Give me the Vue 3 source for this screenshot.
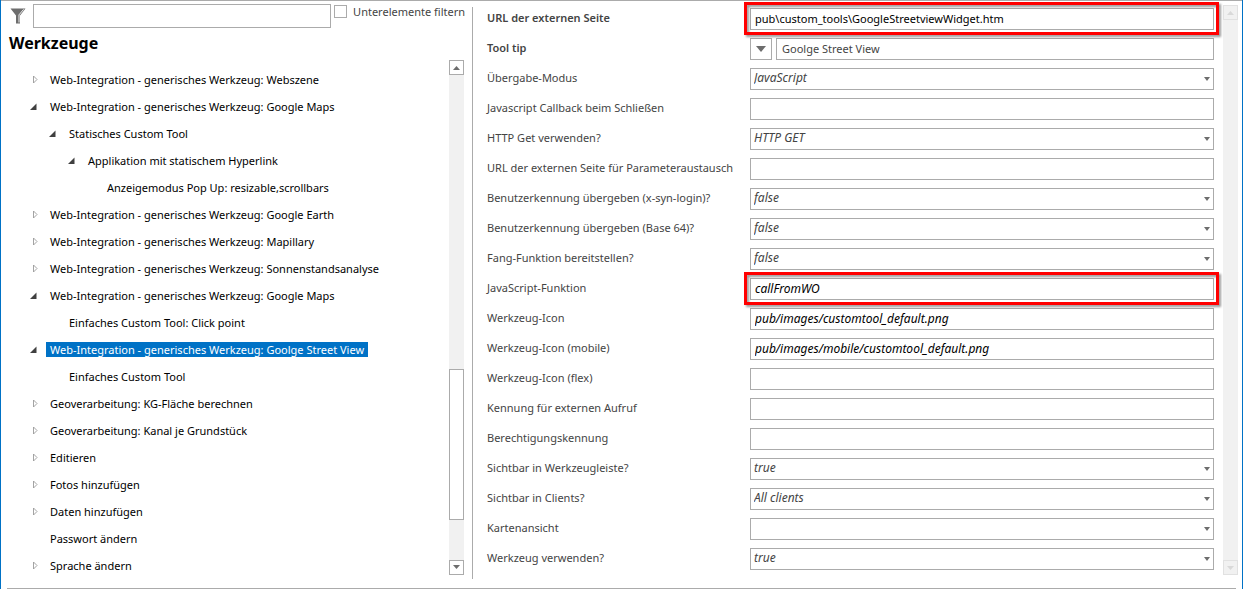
<template>
  <div class="window">
    <main class="content">
      <section class="tools">
        <div class="filter-bar">
          <svg class="funnel" viewBox="0 0 16 16" aria-hidden="true">
            <path d="M0.5 0.5h15L10 7.5V15.5H6V7.5z" fill="#6d6d6d" />
            <path d="M13.6 1.4L9 6.8V14.5" fill="none" stroke="#fff" stroke-width="0.9" />
          </svg>
          <input v-model="filterText" class="filter-input" type="text" aria-label="Filter" />
          <input id="filter-children" v-model="filterChildren" class="check" type="checkbox" />
          <label class="check-label" for="filter-children">Unterelemente filtern</label>
        </div>
        <h1 class="title">Werkzeuge</h1>
        <div class="tree-area">
          <ul class="tree">
            <li
              v-for="(node, i) in nodes"
              :key="i"
              class="node"
              :class="`depth-${node.depth}`"
            >
              <button
                v-if="node.state"
                class="toggle"
                type="button"
                :aria-label="node.label"
                :aria-expanded="node.state === 'open'"
              >
                <svg v-if="node.state === 'open'" viewBox="0 0 8 8">
                  <path d="M7.5 0.5v6.5h-6.5z" fill="#404040" />
                </svg>
                <svg v-else viewBox="0 0 8 8">
                  <path d="M4.5 0v7L8 3.5z" fill="#fff" stroke="#9a9a9a" stroke-width="0.9" />
                </svg>
              </button>
              <span v-else class="toggle"></span>
              <span class="node-label" :class="{ selected: i === selected }" @click="selected = i">{{ node.label }}</span>
            </li>
          </ul>
          <div class="scrollbar">
            <button class="scroll-button" type="button" aria-label="Nach oben">
              <svg viewBox="0 0 7 4"><path d="M0 4h7L3.5 0z" fill="#6d6d6d" /></svg>
            </button>
            <div class="track-before"></div>
            <div class="thumb"></div>
            <div class="track-after"></div>
            <button class="scroll-button" type="button" aria-label="Nach unten">
              <svg viewBox="0 0 7 4"><path d="M0 0h7L3.5 4z" fill="#6d6d6d" /></svg>
            </button>
          </div>
        </div>
      </section>

      <section class="properties">
        <form class="form" @submit.prevent>
          <div v-for="(field, i) in fields" :key="i" class="row">
            <label class="row-label" :class="{ required: field.required }" :for="`field-${i}`">{{ field.label }}</label>
            <div class="control" :class="{ marked: field.marked }">
              <button v-if="field.menu" class="menu-button" type="button" aria-label="Sprache">
                <svg viewBox="0 0 10 6"><path d="M0 0h10L5 6z" fill="#6d6d6d" /></svg>
              </button>
              <template v-if="field.type === 'select'">
                <select :id="`field-${i}`" v-model="field.value" class="box select">
                  <option v-for="option in field.options" :key="option">{{ option }}</option>
                </select>
                <svg class="select-arrow" viewBox="0 0 6 4"><path d="M0 0h6L3 4z" fill="#6d6d6d" /></svg>
              </template>
              <input
                v-else
                :id="`field-${i}`"
                v-model="field.value"
                class="box"
                :class="{ italic: field.italic, muted: field.menu }"
                type="text"
              />
            </div>
          </div>
        </form>
        <div class="scrollbar disabled">
          <button class="scroll-button" type="button" aria-label="Nach oben" disabled>
            <svg viewBox="0 0 7 4"><path d="M0 4h7L3.5 0z" fill="#d9d9d9" /></svg>
          </button>
          <div class="track-before"></div>
          <button class="scroll-button" type="button" aria-label="Nach unten" disabled>
            <svg viewBox="0 0 7 4"><path d="M0 0h7L3.5 4z" fill="#d9d9d9" /></svg>
          </button>
        </div>
      </section>
    </main>
  </div>
</template>

<script setup>
import { ref } from 'vue'

const filterText = ref('')
const filterChildren = ref(false)
const selected = ref(10)

const nodes = [
  { label: 'Web-Integration - generisches Werkzeug: Webszene', depth: 0, state: 'closed' },
  { label: 'Web-Integration - generisches Werkzeug: Google Maps', depth: 0, state: 'open' },
  { label: 'Statisches Custom Tool', depth: 1, state: 'open' },
  { label: 'Applikation mit statischem Hyperlink', depth: 2, state: 'open' },
  { label: 'Anzeigemodus Pop Up: resizable,scrollbars', depth: 3 },
  { label: 'Web-Integration - generisches Werkzeug: Google Earth', depth: 0, state: 'closed' },
  { label: 'Web-Integration - generisches Werkzeug: Mapillary', depth: 0, state: 'closed' },
  { label: 'Web-Integration - generisches Werkzeug: Sonnenstandsanalyse', depth: 0, state: 'closed' },
  { label: 'Web-Integration - generisches Werkzeug: Google Maps', depth: 0, state: 'open' },
  { label: 'Einfaches Custom Tool: Click point', depth: 1 },
  { label: 'Web-Integration - generisches Werkzeug: Goolge Street View', depth: 0, state: 'open' },
  { label: 'Einfaches Custom Tool', depth: 1 },
  { label: 'Geoverarbeitung: KG-Fläche berechnen', depth: 0, state: 'closed' },
  { label: 'Geoverarbeitung: Kanal je Grundstück', depth: 0, state: 'closed' },
  { label: 'Editieren', depth: 0, state: 'closed' },
  { label: 'Fotos hinzufügen', depth: 0, state: 'closed' },
  { label: 'Daten hinzufügen', depth: 0, state: 'closed' },
  { label: 'Passwort ändern', depth: 0 },
  { label: 'Sprache ändern', depth: 0, state: 'closed' }
]

const bool = ['true', 'false']

const fields = ref([
  { label: 'URL der externen Seite', value: 'pub\\custom_tools\\GoogleStreetviewWidget.htm', required: true, marked: true },
  { label: 'Tool tip', value: 'Goolge Street View', required: true, menu: true },
  { label: 'Übergabe-Modus', value: 'JavaScript', type: 'select', options: ['JavaScript'] },
  { label: 'Javascript Callback beim Schließen', value: '' },
  { label: 'HTTP Get verwenden?', value: 'HTTP GET', type: 'select', options: ['HTTP GET'] },
  { label: 'URL der externen Seite für Parameteraustausch', value: '' },
  { label: 'Benutzerkennung übergeben (x-syn-login)?', value: 'false', type: 'select', options: bool },
  { label: 'Benutzerkennung übergeben (Base 64)?', value: 'false', type: 'select', options: bool },
  { label: 'Fang-Funktion bereitstellen?', value: 'false', type: 'select', options: bool },
  { label: 'JavaScript-Funktion', value: 'callFromWO', italic: true, marked: true },
  { label: 'Werkzeug-Icon', value: 'pub/images/customtool_default.png', italic: true },
  { label: 'Werkzeug-Icon (mobile)', value: 'pub/images/mobile/customtool_default.png', italic: true },
  { label: 'Werkzeug-Icon (flex)', value: '' },
  { label: 'Kennung für externen Aufruf', value: '' },
  { label: 'Berechtigungskennung', value: '' },
  { label: 'Sichtbar in Werkzeugleiste?', value: 'true', type: 'select', options: bool },
  { label: 'Sichtbar in Clients?', value: 'All clients', type: 'select', options: ['All clients'] },
  { label: 'Kartenansicht', value: '', type: 'select', options: [''] },
  { label: 'Werkzeug verwenden?', value: 'true', type: 'select', options: bool }
])
</script>

<style>
body {
  margin: 0;
  background: #fff;
}
</style>

<style scoped>
.window {
  box-sizing: border-box;
  min-height: 100vh;
  border: solid #0072c6;
  border-width: 0 1px;
  font-family: 'Segoe UI', 'Noto Sans', sans-serif;
  font-size: 11px;
  line-height: 15px;
  color: #444;
}

.window * {
  box-sizing: border-box;
}

.window::after {
  content: '';
  display: block;
  height: 1px;
  margin: 0 6px;
  background: #ababab;
}

button,
input,
select {
  margin: 0;
  padding: 0;
  border-radius: 0;
  font: inherit;
  color: inherit;
}

svg {
  display: block;
}

.content {
  display: grid;
  grid-template-columns: 471px minmax(0, 1fr);
  border-top: 1px solid #ababab;
  padding-bottom: 9px;
}

.tools {
  display: flex;
  flex-direction: column;
  padding: 3px 8px 0;
}

.filter-bar {
  display: flex;
  align-items: flex-start;
  margin-right: -1px;
}

.funnel {
  width: 16px;
  height: 16px;
  margin: 4px 7px 0 1px;
}

.filter-input {
  flex: 1;
  min-width: 0;
  height: 24px;
  padding: 0 4px;
  border: 1px solid #ababab;
  background: #fff;
}

.check {
  appearance: none;
  width: 13px;
  height: 13px;
  margin: 1px 6px 0 3px;
  border: 1px solid #ababab;
  background: #fff;
}

.check:checked {
  background: #0072c6;
}

.check-label {
  white-space: nowrap;
}

.title {
  margin: 4px 0 0;
  font-size: 16px;
  line-height: 22px;
  font-weight: 700;
  color: #000;
}

.tree-area {
  display: flex;
  flex: 1;
  margin-top: 6px;
}

.tree {
  flex: 1;
  min-width: 0;
  margin: 0;
  padding: 6px 0 0 20px;
  list-style: none;
  color: #000;
}

.node {
  display: flex;
  align-items: center;
  height: 27px;
}

.depth-1 {
  padding-left: 19px;
}

.depth-2 {
  padding-left: 38px;
}

.depth-3 {
  padding-left: 57px;
}

.toggle {
  flex: none;
  width: 8px;
  height: 8px;
  margin-right: 9px;
  border: 0;
  background: none;
}

.toggle svg {
  overflow: visible;
}

.node-label {
  padding: 0 4px;
  white-space: nowrap;
  cursor: default;
}

.selected {
  background: #0072c6;
  color: #fff;
}

.scrollbar {
  display: flex;
  flex: none;
  flex-direction: column;
  width: 15px;
  margin-bottom: 4px;
  background: #f1f1f1;
}

.scroll-button {
  display: flex;
  align-items: center;
  justify-content: center;
  width: 15px;
  height: 15px;
  border: 1px solid #ababab;
  background: #fff;
}

.scroll-button svg {
  width: 7px;
  height: 4px;
}

.track-before {
  flex: 295;
}

.thumb {
  flex: 150;
  border: 1px solid #ababab;
  background: #fff;
}

.track-after {
  flex: 40;
}

.disabled {
  margin-top: -2px;
}

.disabled .scroll-button {
  border-color: #e1e1e1;
  background: #f1f1f1;
}

.properties {
  display: flex;
  gap: 9px;
  margin-top: 6px;
  padding-right: 4px;
  border-left: 1px solid #ababab;
}

.form {
  flex: 1;
  min-width: 0;
  margin-top: -3px;
  padding-left: 14px;
}

.row {
  display: grid;
  grid-template-columns: 263px minmax(0, 1fr);
  align-items: center;
  height: 30px;
}

.row-label {
  padding-bottom: 3px;
}

.required {
  font-weight: 600;
}

.control {
  position: relative;
  display: flex;
  gap: 4px;
}

.box {
  flex: 1;
  min-width: 0;
  height: 22px;
  padding: 0 4px 2px;
  border: 1px solid #ababab;
  background: #fff;
  color: #000;
}

.box.italic {
  font-size: 12px;
  font-style: italic;
}

.box.muted {
  padding-left: 5px;
  color: #444;
}

.box.select {
  appearance: none;
  padding: 0 16px 3px 3px;
  font-size: 12px;
  font-style: italic;
  color: #444;
}

.select-arrow {
  position: absolute;
  top: 9px;
  right: 4px;
  width: 6px;
  height: 4px;
  pointer-events: none;
}

.menu-button {
  display: flex;
  align-items: center;
  justify-content: center;
  width: 22px;
  height: 22px;
  border: 1px solid #ababab;
  background: #fff;
}

.menu-button svg {
  width: 10px;
  height: 6px;
}

.marked::after {
  content: '';
  position: absolute;
  z-index: 1;
  inset: -6px -5px -5px -6px;
  border: 3px solid #f00;
  filter: drop-shadow(2px 2px 1px rgba(0, 0, 0, 0.4));
  pointer-events: none;
}
</style>
